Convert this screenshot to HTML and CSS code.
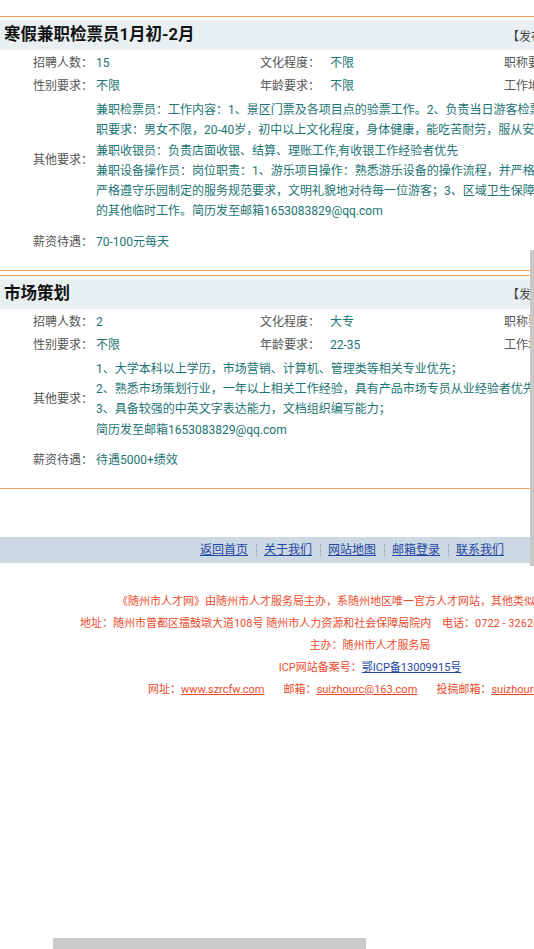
FILE: index.html
```html
<!DOCTYPE html>
<html lang="zh-CN">
<head>
<meta charset="utf-8">
<title>随州市人才网</title>
<link rel="stylesheet" href="styles.css">
</head>
<body>
<div class="page">
  <div class="sheet">
    <div class="spacer-top"></div>

    <section class="job">
      <div class="job-head">
        <h2 class="job-title">寒假兼职检票员1月初-2月</h2>
        <span class="job-date">【发布日期：2019-01-03】</span>
      </div>
      <div class="job-grid">
        <span class="lbl">招聘人数：</span><span class="val">15</span>
        <span class="lbl lbl-mid">文化程度：</span><span class="val">不限</span>
        <span class="lbl lbl-mid">职称要求：</span><span class="val">不限</span>

        <span class="lbl">性别要求：</span><span class="val">不限</span>
        <span class="lbl lbl-mid">年龄要求：</span><span class="val">不限</span>
        <span class="lbl lbl-mid">工作地点：</span><span class="val">随州</span>

        <span class="lbl lbl-other">其他要求：</span>
        <div class="other">兼职检票员：工作内容：1、景区门票及各项目点的验票工作。2、负责当日游客检票统计及其他工作。任<br>职要求：男女不限，20-40岁，初中以上文化程度，身体健康，能吃苦耐劳，服从安排，有责任心。<br>兼职收银员：负责店面收银、结算、理账工作,有收银工作经验者优先<br>兼职设备操作员：岗位职责：1、游乐项目操作：熟悉游乐设备的操作流程，并严格按照操作规程操作；2、<br>严格遵守乐园制定的服务规范要求，文明礼貌地对待每一位游客；3、区域卫生保障；4、完成上级安排<br>的其他临时工作。简历发至邮箱1653083829@qq.com</div>

        <span class="lbl lbl-pay">薪资待遇：</span><span class="val val-pay">70-100元每天</span>
      </div>
    </section>

    <section class="job">
      <div class="job-head">
        <h2 class="job-title">市场策划</h2>
        <span class="job-date">【发布日期：2019-01-03】</span>
      </div>
      <div class="job-grid">
        <span class="lbl">招聘人数：</span><span class="val">2</span>
        <span class="lbl lbl-mid">文化程度：</span><span class="val">大专</span>
        <span class="lbl lbl-mid">职称要求：</span><span class="val">不限</span>

        <span class="lbl">性别要求：</span><span class="val">不限</span>
        <span class="lbl lbl-mid">年龄要求：</span><span class="val">22-35</span>
        <span class="lbl lbl-mid">工作地点：</span><span class="val">随州</span>

        <span class="lbl lbl-other">其他要求：</span>
        <div class="other">1、大学本科以上学历，市场营销、计算机、管理类等相关专业优先；<br>2、熟悉市场策划行业，一年以上相关工作经验，具有产品市场专员从业经验者优先；<br>3、具备较强的中英文字表达能力，文档组织编写能力；<br>简历发至邮箱1653083829@qq.com</div>

        <span class="lbl lbl-pay">薪资待遇：</span><span class="val val-pay">待遇5000+绩效</span>
      </div>
    </section>

    <nav class="bottom-nav">
      <a href="#">返回首页</a><span class="sep"></span>
      <a href="#">关于我们</a><span class="sep"></span>
      <a href="#">网站地图</a><span class="sep"></span>
      <a href="#">邮箱登录</a><span class="sep"></span>
      <a href="#">联系我们</a>
    </nav>

    <footer class="footer">
      <p>《随州市人才网》由随州市人才服务局主办，系随州地区唯一官方人才网站，其他类似网站均与本站无关</p>
      <p>地址：随州市曾都区擂鼓墩大道108号 随州市人力资源和社会保障局院内&nbsp;&nbsp;&nbsp; 电话：0722 - 3262688&nbsp;&nbsp;&nbsp; 邮政编码：441300&nbsp;&nbsp;</p>
      <p>主办：随州市人才服务局</p>
      <p>ICP网站备案号：<a class="icp" href="#">鄂ICP备13009915号</a></p>
      <p>网址：<a href="#">www.szrcfw.com</a>&nbsp;&nbsp;&nbsp;&nbsp;&nbsp;&nbsp; 邮箱：<a href="#">suizhourc@163.com</a>&nbsp;&nbsp;&nbsp;&nbsp;&nbsp;&nbsp; 投搞邮箱：<a href="#">suizhourc@163.com</a></p>
    </footer>
  </div>
</div>
<div class="vscroll"></div>
<div class="hscroll"></div>
</body>
</html>
```

FILE: styles.css
```css
html, body {
  margin: 0;
  padding: 0;
  background: #ffffff;
}

body {
  font-family: Roboto, "Noto Sans CJK SC", sans-serif;
  font-size: 12px;
  color: #555555;
  height: 949px;
  overflow: hidden;
}

.page {
  width: 534px;
  overflow: hidden;
}

.sheet {
  width: 910px;
}

.spacer-top {
  height: 16px;
}

.job {
  border-top: 1px solid #f7a25c;
  border-bottom: 1px solid #f7a25c;
  padding-bottom: 16px;
  margin-bottom: 4px;
}

.job-head {
  margin-top: 3px;
  height: 30px;
  background: #e9f0f2;
  display: grid;
  grid-template-columns: 507px auto;
  align-items: center;
}

.job-title {
  margin: 0;
  padding-left: 4px;
  font-size: 16.5px;
  font-weight: bold;
  color: #111111;
  line-height: 30px;
  white-space: nowrap;
}

.job-date {
  font-size: 12px;
  color: #444444;
  white-space: nowrap;
}

.job-grid {
  padding-top: 2px;
  display: grid;
  grid-template-columns: 96px 164px 70px 174px 70px 1fr;
  grid-template-rows: 23px 23px auto 32px;
  align-items: center;
  line-height: 23px;
}

.lbl {
  padding-left: 33px;
  color: #555555;
  white-space: nowrap;
}

.lbl.lbl-mid {
  padding-left: 0;
}

.val {
  color: #1c7474;
  white-space: nowrap;
}

.lbl-other {
  grid-column: 1;
  align-self: center;
  margin-top: 2px;
}

.other {
  grid-column: 2 / 7;
  margin-top: 2px;
  line-height: 20.3px;
  color: #1c7474;
  white-space: nowrap;
}

.lbl-pay,
.val-pay {
  align-self: end;
  line-height: 23px;
}

.val-pay {
  grid-column: 2 / 7;
}

.bottom-nav {
  margin-top: 48px;
  height: 26px;
  background: #cdd8e5;
  display: flex;
  align-items: center;
  padding-left: 200px;
}

.bottom-nav a {
  color: #2146a3;
  font-size: 12px;
  text-decoration: underline;
  white-space: nowrap;
  line-height: 26px;
}

.sep {
  width: 0;
  height: 12px;
  border-left: 1px dotted #9a9a9a;
  margin: 0 7.5px;
}

.footer {
  width: 740px;
  padding-top: 28px;
  text-align: center;
  color: #ec4b2c;
  font-size: 11px;
}

.footer p {
  margin: 0;
  line-height: 22px;
  white-space: nowrap;
}

.footer a {
  color: #ec4b2c;
  text-decoration: underline;
}

.footer a.icp {
  color: #2146a3;
}

.vscroll {
  position: fixed;
  right: 0;
  top: 250px;
  width: 4px;
  height: 316px;
  background: #c8c8c8;
}

.hscroll {
  position: fixed;
  left: 53px;
  top: 938px;
  width: 313px;
  height: 11px;
  background: #cacaca;
}
```
